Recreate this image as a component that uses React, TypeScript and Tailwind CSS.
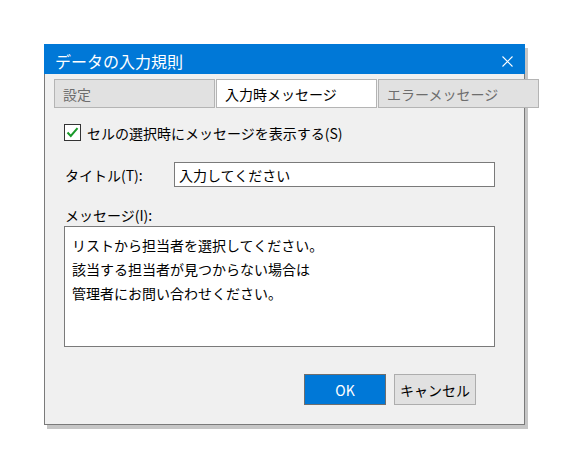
import React from "react";

const font = { fontFamily: '"Noto Sans CJK JP", "Noto Sans", sans-serif' };

function Tab({ label, active }: { label: string; active?: boolean }) {
  return (
    <div
      className={
        "w-[161px] h-[29px] shrink-0 border flex items-center pl-[8px] text-[14px] leading-none " +
        (active
          ? "bg-white border-[#b4b4b4] text-black"
          : "bg-[#e1e1e1] border-[#b4b4b4] text-[#6d6d6d]")
      }
    >
      {label}
    </div>
  );
}

export default function App() {
  return (
    <div className="w-[568px] h-[468px] bg-white pt-[44px] pl-[44px]" style={font}>
      <div className="w-[481px] h-[381px] flex flex-col shadow-[3px_4px_0_#c6c6c6]">
        {/* title bar */}
        <div className="h-[30px] shrink-0 bg-[#0078d7] flex items-center justify-between pl-[11px] pr-[12px] pt-[4px]">
          <span className="text-white text-[16px] leading-none">データの入力規則</span>
          <svg width="11" height="11" viewBox="0 0 11 11" className="mt-[1px]">
            <path d="M0.5 0.5 L10.5 10.5 M10.5 0.5 L0.5 10.5" stroke="white" strokeWidth="1.1" />
          </svg>
        </div>

        {/* body */}
        <div className="flex-1 bg-[#f0f0f0] border-x border-b border-[#7a7a7a] flex flex-col text-black">
          <div className="flex gap-[1px] mt-[5px] ml-[9px]">
            <Tab label="設定" />
            <Tab label="入力時メッセージ" active />
            <Tab label="エラーメッセージ" />
          </div>

          {/* checkbox */}
          <div className="flex items-center mt-[16px] ml-[19px] h-[17px]">
            <div className="w-[17px] h-[17px] border border-[#333333] bg-white flex items-center justify-center">
              <svg width="13" height="11" viewBox="0 0 13 11">
                <path d="M1.5 5.5 L4.8 9 L11.5 1.2" stroke="#1a9a2a" strokeWidth="2" fill="none" />
              </svg>
            </div>
            <span className="ml-[6px] text-[14px] leading-none">セルの選択時にメッセージを表示する(S)</span>
          </div>

          {/* title field */}
          <div className="flex items-center mt-[21px] h-[25px]">
            <span className="ml-[20px] w-[109px] text-[14px] leading-none">タイトル(T):</span>
            <div className="w-[321px] h-[25px] bg-white border border-[#7a7a7a] flex items-center pl-[4px] text-[14px] leading-none">
              入力してください
            </div>
          </div>

          {/* message field */}
          <div className="ml-[20px] mt-[18px] h-[20px] flex items-center text-[14px] leading-none">
            メッセージ(I):
          </div>
          <div className="ml-[19px] mt-[1px] w-[431px] h-[121px] bg-white border border-[#7a7a7a] pl-[7px] pt-[6px] text-[14px] leading-[24px]">
            <div>リストから担当者を選択してください。</div>
            <div>該当する担当者が見つからない場合は</div>
            <div>管理者にお問い合わせください。</div>
          </div>

          {/* buttons */}
          <div className="flex justify-end gap-[8px] mt-[27px] pr-[48px]">
            <div className="w-[82px] h-[31px] bg-[#0078d7] border border-[#6e6e6e] flex items-center justify-center text-white text-[14px] leading-none">
              OK
            </div>
            <div className="w-[82px] h-[31px] bg-[#e1e1e1] border border-[#adadad] flex items-center justify-center text-[14px] leading-none">
              キャンセル
            </div>
          </div>
        </div>
      </div>
    </div>
  );
}
